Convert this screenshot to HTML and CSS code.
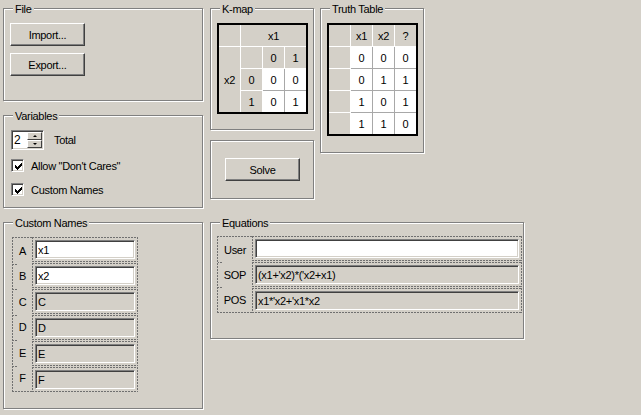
FILE: index.html
```html
<!DOCTYPE html>
<html>
<head>
<meta charset="utf-8">
<title>K-map Solver</title>
<link rel="stylesheet" href="styles.css">
</head>
<body>
<div class="app">
  <div class="col">
    <div class="group g-file">
      <div class="legend">File</div>
      <div class="gbody file-body">
        <button class="btn">Import...</button>
        <button class="btn">Export...</button>
      </div>
    </div>
    <div class="group g-vars">
      <div class="legend">Variables</div>
      <div class="gbody vars-body">
        <div class="spin-row">
          <div class="spin">
            <span class="spin-val">2</span>
            <div class="spin-btns">
              <span class="sb"><span class="arr up"></span></span>
              <span class="sb"><span class="arr down"></span></span>
            </div>
          </div>
          <span>Total</span>
        </div>
        <div class="chk-row first">
          <span class="chk"><svg width="7" height="7" viewBox="0 0 7 7" shape-rendering="crispEdges"><path d="M0 2h1v3H0zM1 3h1v3H1zM2 4h1v3H2zM3 3h1v3H3zM4 2h1v3H4zM5 1h1v3H5zM6 0h1v3H6z" fill="#000"/></svg></span>
          <span>Allow "Don't Cares"</span>
        </div>
        <div class="chk-row second">
          <span class="chk"><svg width="7" height="7" viewBox="0 0 7 7" shape-rendering="crispEdges"><path d="M0 2h1v3H0zM1 3h1v3H1zM2 4h1v3H2zM3 3h1v3H3zM4 2h1v3H4zM5 1h1v3H5zM6 0h1v3H6z" fill="#000"/></svg></span>
          <span>Custom Names</span>
        </div>
      </div>
    </div>
  </div>

  <div class="rtop">
    <div class="kcol">
      <div class="group g-kmap">
        <div class="legend">K-map</div>
        <div class="gbody tbl-body">
          <div class="grid kmap">
            <div class="c f"></div>
            <div class="c f nr span-c3">x1</div>
            <div class="c f nb span-r3">x2</div>
            <div class="c f"></div>
            <div class="c f">0</div>
            <div class="c f nr">1</div>
            <div class="c f">0</div>
            <div class="c">0</div>
            <div class="c nr">0</div>
            <div class="c f nb">1</div>
            <div class="c nb">0</div>
            <div class="c nr nb">1</div>
          </div>
        </div>
      </div>
      <div class="group g-solve">
        <div class="gbody solve-body">
          <button class="btn">Solve</button>
        </div>
      </div>
    </div>
    <div class="group g-truth">
      <div class="legend">Truth Table</div>
      <div class="gbody tbl-body">
        <div class="grid truth">
          <div class="c f"></div><div class="c f">x1</div><div class="c f">x2</div><div class="c f nr">?</div>
          <div class="c f"></div><div class="c">0</div><div class="c">0</div><div class="c nr">0</div>
          <div class="c f"></div><div class="c">0</div><div class="c">1</div><div class="c nr">1</div>
          <div class="c f"></div><div class="c">1</div><div class="c">0</div><div class="c nr">1</div>
          <div class="c f nb"></div><div class="c nb">1</div><div class="c nb">1</div><div class="c nr nb">0</div>
        </div>
      </div>
    </div>
  </div>

  <div class="group g-names">
    <div class="legend">Custom Names</div>
    <div class="gbody names-body">
      <div class="dtable">
        <div class="lblcol narrow">
          <div class="lbl">A</div>
          <div class="lbl">B</div>
          <div class="lbl">C</div>
          <div class="lbl">D</div>
          <div class="lbl">E</div>
          <div class="lbl">F</div>
        </div>
        <div class="fcol">
          <div class="fcell"><input class="tb name" type="text" value="x1"></div>
          <div class="fcell"><input class="tb name" type="text" value="x2"></div>
          <div class="fcell"><input class="tb name dis" type="text" value="C" readonly></div>
          <div class="fcell"><input class="tb name dis" type="text" value="D" readonly></div>
          <div class="fcell"><input class="tb name dis" type="text" value="E" readonly></div>
          <div class="fcell"><input class="tb name dis" type="text" value="F" readonly></div>
        </div>
      </div>
    </div>
  </div>

  <div class="group g-eq">
    <div class="legend">Equations</div>
    <div class="gbody eq-body">
      <div class="dtable">
        <div class="lblcol wide">
          <div class="lbl">User</div>
          <div class="lbl">SOP</div>
          <div class="lbl">POS</div>
        </div>
        <div class="fcol">
          <div class="fcell"><input class="tb eq" type="text" value=""></div>
          <div class="fcell"><input class="tb eq dis" type="text" value="(x1+'x2)*('x2+x1)" readonly></div>
          <div class="fcell"><input class="tb eq dis" type="text" value="x1*'x2+'x1*x2" readonly></div>
        </div>
      </div>
    </div>
  </div>
</div>
</body>
</html>
```

FILE: styles.css
```css
* { box-sizing: border-box; }

html, body {
  margin: 0;
  padding: 0;
  background: #d4d0c8;
}

body {
  width: 641px;
  height: 415px;
  overflow: hidden;
  font-family: "Liberation Sans", Arial, sans-serif;
  font-size: 11px;
  letter-spacing: -0.3px;
  color: #000;
}

.app {
  display: grid;
  grid-template-columns: 200px 314px;
  column-gap: 7px;
  row-gap: 14px;
  align-items: start;
  padding: 8px 0 0 3px;
}

.col {
  display: flex;
  flex-direction: column;
  gap: 14px;
}

/* etched group box */
.group {
  border: 1px solid #808080;
  box-shadow: inset 1px 1px #fff, 1px 1px #fff;
  display: flex;
  flex-direction: column;
  align-items: flex-start;
}

.legend {
  margin: -6px 0 0 9px;
  padding: 0 2px;
  height: 13px;
  line-height: 13px;
  background: #d4d0c8;
  white-space: nowrap;
}

.gbody {
  display: flex;
  flex-direction: column;
  align-items: flex-start;
}

.g-file { height: 93px; }
.g-vars { height: 93px; }
.g-names { height: 187px; }
.g-kmap { height: 122px; }
.g-solve { height: 59px; margin-top: 10px; }
.g-truth { width: 104px; height: 145px; }
.g-eq { height: 117px; }

.file-body { padding: 7px 0 0 6px; gap: 7px; }
.vars-body { padding: 7px 0 0 7px; }
.tbl-body { padding: 7px 0 0 6px; }
.solve-body { padding: 17px 0 0 14px; }
.names-body { padding: 7px 0 0 8px; }
.eq-body { padding: 6px 0 0 6px; }

.rtop {
  display: flex;
  gap: 6px;
  align-items: flex-start;
}

.kcol {
  width: 104px;
  display: flex;
  flex-direction: column;
}

/* raised push button */
.btn {
  width: 75px;
  height: 23px;
  margin: 0;
  padding: 0;
  font: inherit;
  letter-spacing: inherit;
  color: #000;
  background: #d4d0c8;
  border: 1px solid;
  border-color: #fff #404040 #404040 #fff;
  box-shadow: inset -1px -1px #808080;
  text-align: center;
}

/* sunken frame */
.spin, .chk, .tb {
  border: 1px solid;
  border-color: #808080 #fff #fff #808080;
  box-shadow: inset 1px 1px #404040, inset -1px -1px #d4d0c8;
}

.spin-row {
  display: flex;
  align-items: center;
  gap: 10px;
  height: 20px;
}

.spin {
  width: 33px;
  height: 20px;
  background: #fff;
  display: flex;
}

.spin-val {
  padding-left: 2px;
  line-height: 18px;
  font-size: 12px;
}

.spin-btns {
  width: 15px;
  height: 16px;
  margin: 1px 1px 0 auto;
  display: flex;
  flex-direction: column;
}

.sb {
  height: 8px;
  background: #d4d0c8;
  border: 1px solid;
  border-color: #fff #404040 #404040 #fff;
  display: flex;
  align-items: center;
  justify-content: center;
}

.arr {
  width: 0;
  height: 0;
  border-left: 2px solid transparent;
  border-right: 2px solid transparent;
}
.arr.up { border-bottom: 2px solid #000; }
.arr.down { border-top: 2px solid #000; }

.chk-row {
  display: flex;
  align-items: center;
  gap: 7px;
  height: 13px;
}
.chk-row.first { margin-top: 9px; }
.chk-row.second { margin-top: 11px; }

.chk {
  width: 13px;
  height: 13px;
  background: #fff;
  display: flex;
  padding: 2px 0 0 2px;
}
.chk svg { display: block; margin: 1px 0 0 1px; }

/* flex grids */
.grid {
  display: grid;
  border: 2px solid #000;
  background: #fff;
}
.kmap {
  grid-template-columns: 22px 22px 22px 21px;
  grid-template-rows: 22px 22px 22px 21px;
}
.truth {
  grid-template-columns: 22px 22px 22px 21px;
  grid-template-rows: 22px 22px 22px 22px 21px;
}
.c {
  display: flex;
  align-items: center;
  justify-content: center;
  background: #fff;
  border-right: 1px solid #a8a8a8;
  border-bottom: 1px solid #a8a8a8;
}
.c.f {
  background: #d4d0c8;
  border-color: #fff;
}
.c.nr { border-right: 0; }
.c.nb { border-bottom: 0; }
.span-c3 { grid-column: span 3; }
.span-r3 { grid-row: span 3; }

/* dashed label/field tables (2px on, 1px off, like the original) */
.dtable {
  display: flex;
  align-items: stretch;
}

.dash {
  border: 1px solid transparent;
  background-origin: border-box;
  background-clip: border-box;
  background-repeat: no-repeat;
}

.lblcol, .fcell {
  border: 1px solid transparent;
  background-origin: border-box;
  background-repeat: no-repeat;
  background-image:
    repeating-linear-gradient(90deg, #707070 0 2px, transparent 2px 3px),
    repeating-linear-gradient(90deg, #707070 0 2px, transparent 2px 3px),
    repeating-linear-gradient(180deg, #707070 0 2px, transparent 2px 3px),
    repeating-linear-gradient(180deg, #707070 0 2px, transparent 2px 3px);
  background-size: 100% 1px, 100% 1px, 1px 100%, 1px 100%;
  background-position: left top, left bottom, left top, right top;
}

.lblcol {
  border-right: 0;
  background-image:
    repeating-linear-gradient(90deg, #707070 0 2px, transparent 2px 3px),
    repeating-linear-gradient(90deg, #707070 0 2px, transparent 2px 3px),
    repeating-linear-gradient(180deg, #707070 0 2px, transparent 2px 3px);
  background-size: 100% 1px, 100% 1px, 1px 100%;
  background-position: left top, left bottom, left top;
  display: flex;
  flex-direction: column;
}
.lblcol.narrow { width: 20px; }
.lblcol.wide { width: 35px; }

.lbl {
  flex: 1;
  display: flex;
  align-items: center;
  justify-content: center;
}
.lbl + .lbl {
  background: repeating-linear-gradient(90deg, #707070 0 2px, transparent 2px 3px) no-repeat -1px 0 / 6px 1px;
}

.fcol {
  display: flex;
  flex-direction: column;
  gap: 1px;
}

.fcell {
  padding: 2px;
}

.tb {
  display: block;
  height: 19px;
  margin: 0;
  padding: 0 1px 0 2px;
  font: inherit;
  letter-spacing: inherit;
  color: #000;
  background: #fff;
  outline: none;
  -webkit-appearance: none;
  appearance: none;
}
.tb.name { width: 100px; }
.tb.eq { width: 264px; }
.tb.dis { background: #d4d0c8; }
```
